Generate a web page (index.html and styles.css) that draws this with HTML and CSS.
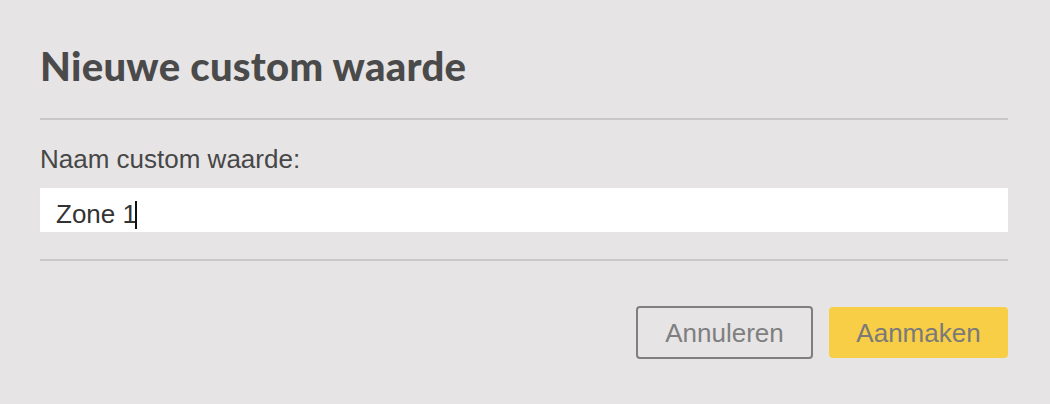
FILE: index.html
```html
<!DOCTYPE html>
<html lang="nl">
<head>
    <meta charset="UTF-8">
    <meta name="viewport" content="width=device-width, initial-scale=1.0">
    <title>Nieuwe custom waarde</title>
    <link rel="stylesheet" href="styles.css">
</head>
<body>
    <div class="dialog">
        <div class="dialog-header">
            <h1 class="dialog-title">Nieuwe custom waarde</h1>
        </div>
        <div class="dialog-body">
            <label class="field-label" for="value-name">Naam custom waarde:</label>
            <div class="field" id="value-name">Zone 1<span class="caret"></span></div>
        </div>
        <div class="dialog-footer">
            <button class="button button-secondary">Annuleren</button>
            <button class="button button-primary">Aanmaken</button>
        </div>
    </div>
</body>
</html>
```

FILE: styles.css
```css
:root {
    --bg-color: #e6e4e5;
    --text-color: #4a4a4a;
    --rule-color: #c9c7c8;
    --muted: #7f7f7f;
    --accent-color: #f7ce46;
}

* {
    box-sizing: border-box;
    margin: 0;
    padding: 0;
}

html, body {
    height: 100%;
    background-color: var(--bg-color);
    font-family: 'Liberation Sans', Arial, sans-serif;
    color: var(--text-color);
}

.dialog {
    padding: 42px 42px 0 40px;
}

.dialog-header {
    padding-bottom: 28px;
    border-bottom: 2px solid var(--rule-color);
}

.dialog-title {
    font-family: 'Lato', sans-serif;
    font-weight: 900;
    font-size: 40px;
    line-height: 48px;
    letter-spacing: 0.3px;
    color: #4a4a4a;
}

.dialog-body {
    display: flex;
    flex-direction: column;
    padding-top: 24px;
    padding-bottom: 27px;
    border-bottom: 2px solid var(--rule-color);
}

.field-label {
    font-size: 26px;
    line-height: 30px;
    color: #474747;
    margin-bottom: 14px;
}

.field {
    height: 44px;
    padding: 11px 16px 0;
    background-color: #ffffff;
    font-size: 26px;
    line-height: 30px;
    color: #333333;
    white-space: pre;
}

.caret {
    display: inline-block;
    width: 2px;
    height: 28px;
    margin-left: -2px;
    vertical-align: -6px;
    background-color: #111111;
}

.dialog-footer {
    display: flex;
    justify-content: flex-end;
    align-items: center;
    gap: 16px;
    padding-top: 45px;
}

.button {
    font-family: 'Liberation Sans', Arial, sans-serif;
    font-size: 26px;
    line-height: 30px;
    color: var(--muted);
    border-radius: 4px;
    cursor: pointer;
}

.button-secondary {
    width: 177px;
    height: 53px;
    background-color: transparent;
    border: 2px solid var(--muted);
}

.button-primary {
    width: 179px;
    height: 51px;
    background-color: var(--accent-color);
    border: none;
    color: #7a7a7a;
}
```
